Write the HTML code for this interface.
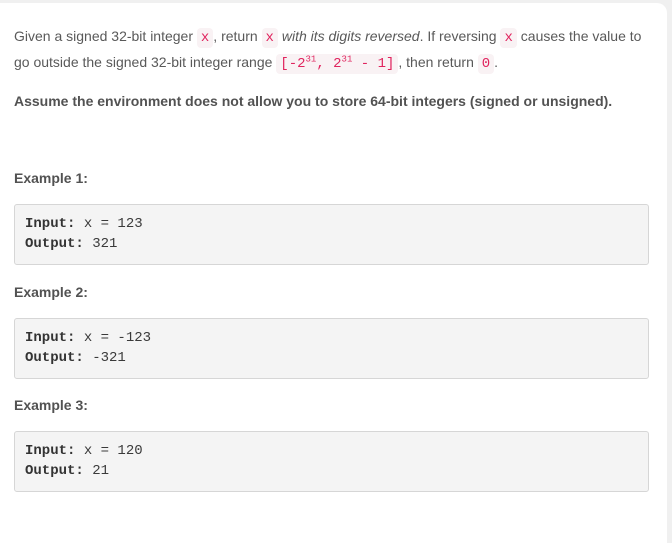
<!DOCTYPE html>
<html><head><meta charset="utf-8"><style>
html,body{margin:0;padding:0;background:#f0f0f0;width:672px;height:543px;overflow:hidden}
.card{position:absolute;left:0;top:3px;width:667px;height:540px;background:#fff;border-top-right-radius:10px}
.t{position:absolute;left:14px;font-family:"Liberation Sans",sans-serif;font-size:14px;color:#595959;white-space:nowrap}
code{font-family:"Liberation Mono",monospace;font-size:14px;color:#e0245e;background:#f9f2f4;border-radius:4px;padding:2px 4px}
sup{font-size:9px;line-height:0}
.b{font-weight:bold;color:#525252}
pre{position:absolute;left:14px;width:613px;margin:0;padding:9px 10px 10px;background:#f4f4f4;border:1px solid #d6d6d6;border-radius:3px;font-family:"Liberation Mono",monospace;font-size:14px;line-height:20px;color:#3a3a3a;height:40px}
pre b{color:#333}
</style></head><body>
<div class="card"></div>
<div class="t" style="top:26px;line-height:20px">Given a signed 32-bit integer <code>x</code>, return <code>x</code> <i>with its digits reversed</i>. If reversing <code>x</code> causes the value to</div>
<div class="t" style="top:52px;line-height:20px">go outside the signed 32-bit integer range <code>[-2<sup>31</sup>, 2<sup>31</sup> - 1]</code>, then return <code>0</code>.</div>
<div class="t b" style="top:93px">Assume the environment does not allow you to store 64-bit integers (signed or unsigned).</div>
<div class="t b" style="top:170px">Example 1:</div>
<pre style="top:204px"><b>Input:</b> x = 123
<b>Output:</b> 321</pre>
<div class="t b" style="top:284px">Example 2:</div>
<pre style="top:318px"><b>Input:</b> x = -123
<b>Output:</b> -321</pre>
<div class="t b" style="top:397px">Example 3:</div>
<pre style="top:431px"><b>Input:</b> x = 120
<b>Output:</b> 21</pre>
</body></html>
